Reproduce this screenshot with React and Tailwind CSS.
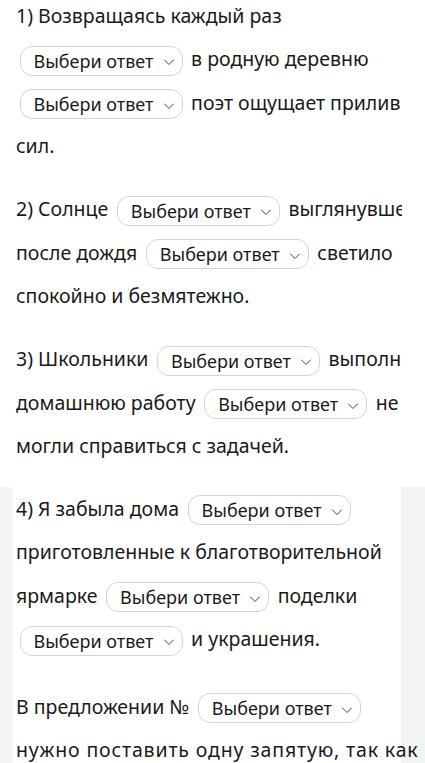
import React from "react";

function Select() {
  return (
    <span className="mx-[3.5px] inline-flex h-[30px] w-[163px] items-center justify-between rounded-[12px] border border-[#d4d4d4] bg-white pl-[13px] pr-[7px] align-middle text-[18px] leading-none tracking-normal text-[#1a1a1a]">
      <span>Выбери ответ</span>
      <svg width="12" height="12" viewBox="0 0 12 12" fill="none" className="mt-[3px]">
        <path d="M1.5 4l4.5 4.5L10.5 4" stroke="#444" strokeWidth="1" strokeLinecap="round" strokeLinejoin="round" />
      </svg>
    </span>
  );
}

export default function App() {
  return (
    <div
      className="w-[425px] min-h-[763px] overflow-hidden bg-white text-[19.5px] leading-[43.5px] text-[#1a1a1a]"
      style={{ fontFamily: '"Noto Sans", "DejaVu Sans", sans-serif' }}
    >
      <div className="w-[402px] overflow-hidden">
        <div className="-mt-[6.3px] w-[425px] pl-4">
          <p className="mb-[19.5px]">
            1) Возвращаясь каждый раз <Select /> в родную деревню <Select /> поэт ощущает прилив сил.
          </p>
          <p className="mb-[19.5px]">
            2) Солнце <Select /> выглянувшее после дождя <Select /> светило спокойно и безмятежно.
          </p>
          <p className="mb-[19px]">
            3) Школьники <Select /> выполнив домашнюю работу <Select /> не могли справиться с задачей.
          </p>
        </div>
      </div>
      <div className="bg-[#f3f4f6] pl-[13px] pr-[24px] pb-10">
        <div className="bg-white pl-[3px]">
          <p className="w-[400px]">
            4) Я забыла дома <Select /> приготовленные к благотворительной ярмарке <Select /> поделки <Select /> и украшения.
          </p>
          <p className="mt-[24px] w-[400px]">
            В предложении № <Select />
          </p>
          <p className="w-[410px] tracking-[0.85px]">
            нужно поставить одну запятую, так как причастный оборот стоит после определяемого слова.
          </p>
        </div>
      </div>
    </div>
  );
}
